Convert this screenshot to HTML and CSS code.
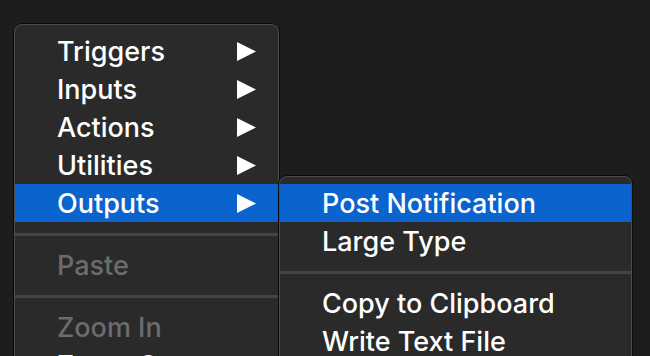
FILE: index.html
```html
<!DOCTYPE html>
<html lang="en">
<head>
    <meta charset="UTF-8">
    <meta name="viewport" content="width=device-width, initial-scale=1.0">
    <title>Menu</title>
    <link rel="stylesheet" href="styles.css">
</head>
<body>
    <ul class="menu main">
        <li class="item">
            <span>Triggers</span>
            <svg class="arrow" viewBox="0 0 19 19"><polygon points="0,0 19,9.5 0,19"/></svg>
        </li>
        <li class="item">
            <span>Inputs</span>
            <svg class="arrow" viewBox="0 0 19 19"><polygon points="0,0 19,9.5 0,19"/></svg>
        </li>
        <li class="item">
            <span>Actions</span>
            <svg class="arrow" viewBox="0 0 19 19"><polygon points="0,0 19,9.5 0,19"/></svg>
        </li>
        <li class="item">
            <span>Utilities</span>
            <svg class="arrow" viewBox="0 0 19 19"><polygon points="0,0 19,9.5 0,19"/></svg>
        </li>
        <li class="item active open">
            <span>Outputs</span>
            <svg class="arrow" viewBox="0 0 19 19"><polygon points="0,0 19,9.5 0,19"/></svg>

            <!-- submenu -->
            <ul class="menu sub">
                <li class="item active"><span>Post Notification</span></li>
                <li class="item"><span>Large Type</span></li>
                <li class="sep"></li>
                <li class="item"><span>Copy to Clipboard</span></li>
                <li class="item"><span>Write Text File</span></li>
            </ul>
        </li>
        <li class="sep"></li>
        <li class="item disabled"><span>Paste</span></li>
        <li class="sep"></li>
        <li class="item disabled"><span>Zoom In</span></li>
        <li class="item"><span>Zoom Out</span></li>
    </ul>
</body>
</html>
```

FILE: styles.css
```css
* {
    box-sizing: border-box;
    margin: 0;
    padding: 0;
}
html, body {
    height: 100%;
    overflow: hidden;
}
body {
    background-color: #1d1d1f;
    color: white;
    font-family: 'Inter', 'Noto Sans', sans-serif;
    font-size: 27px;
    font-weight: 500;
    padding: 24px 0 0 14px;
}
.menu {
    list-style: none;
    background-color: #2a2a2b;
    border: 1px solid #4d4d4f;
    border-bottom: none;
    border-radius: 8px 8px 0 0;
    box-shadow: 0 0 0 1px #0b0b0b;
    padding-top: 7px;
}
.main {
    width: 265px;
}
.sub {
    position: absolute;
    top: -8px;
    left: calc(100% + 1px);
    width: 353px;
}
.item {
    position: relative;
    display: flex;
    justify-content: space-between;
    align-items: center;
    height: 38px;
    padding: 0 22px 0 42px;
    white-space: nowrap;
}
.item.active {
    background-color: #0b63ce;
}
.item.disabled {
    color: #6c6c6c;
}
.arrow {
    width: 19px;
    height: 19px;
    fill: white;
}
.sep {
    height: 24px;
    display: flex;
    align-items: center;
}
.sep::before {
    content: "";
    display: block;
    width: 100%;
    height: 3px;
    background-color: #444446;
}
```
